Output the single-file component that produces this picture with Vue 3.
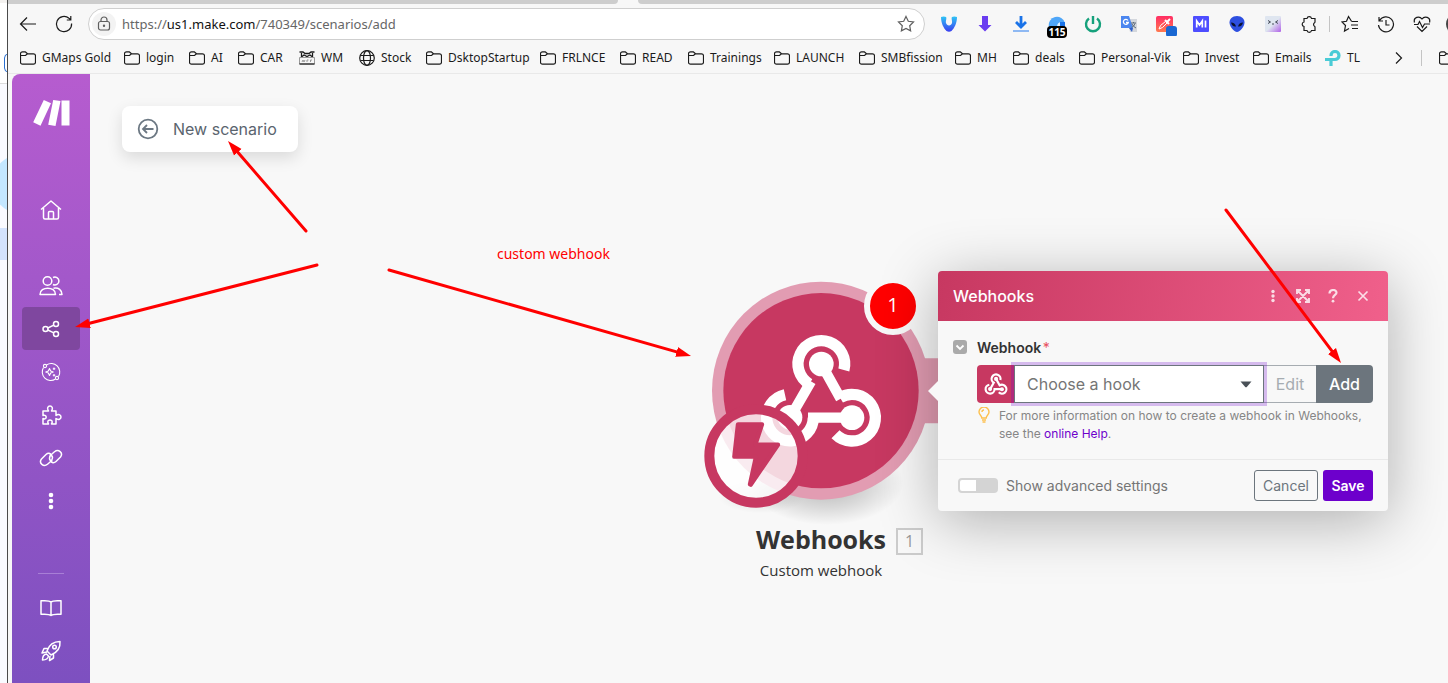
<script setup>
import { ref, computed } from 'vue'

const url = ref('https://us1.make.com/740349/scenarios/add')
const urlParts = computed(() => url.value.match(/^(\w+:\/\/)?([^/]*)(.*)$/).slice(1))

const bookmarks = [
  { label: 'GMaps Gold', icon: 'folder' },
  { label: 'login', icon: 'folder' },
  { label: 'AI', icon: 'folder' },
  { label: 'CAR', icon: 'folder' },
  { label: 'WM', icon: 'mail' },
  { label: 'Stock', icon: 'globe' },
  { label: 'DsktopStartup', icon: 'folder' },
  { label: 'FRLNCE', icon: 'folder' },
  { label: 'READ', icon: 'folder' },
  { label: 'Trainings', icon: 'folder' },
  { label: 'LAUNCH', icon: 'folder' },
  { label: 'SMBfission', icon: 'folder' },
  { label: 'MH', icon: 'folder' },
  { label: 'deals', icon: 'folder' },
  { label: 'Personal-Vik', icon: 'folder' },
  { label: 'Invest', icon: 'folder' },
  { label: 'Emails', icon: 'folder' },
  { label: 'TL', icon: 'tl' }
]

const hook = ref('')
const advanced = ref(false)

const HEAD = 14
const arrows = [
  [306, 231, 228, 141],
  [317, 265, 75, 327],
  [389, 270, 691, 356],
  [1226, 210, 1341, 363]
].map(([x1, y1, x2, y2]) => {
  const len = Math.hypot(x2 - x1, y2 - y1)
  const k = (len - HEAD) / len
  return { x1, y1, x2: x1 + (x2 - x1) * k, y2: y1 + (y2 - y1) * k }
})
</script>

<template>
  <div class="desktop">
    <svg class="behind" viewBox="0 0 7 683" preserveAspectRatio="xMinYMin slice" aria-hidden="true">
      <rect width="7" height="683" fill="#f9faff" />
      <rect width="7" height="83" fill="#fff" />
      <rect width="7" height="3" fill="#f3f1ef" />
      <rect y="83" width="7" height="1" fill="#dcdcdc" />
      <rect x="4.5" y="54" width="12" height="18" rx="4" fill="#fff" stroke="#2a6fd0" />
      <circle cx="22" cy="184" r="30" fill="#c3e7ff" />
      <rect y="228" width="7" height="32" fill="#d3e3fd" />
    </svg>

    <div class="browser">
      <div class="tabs"><i class="tab-left"></i><i class="tab-right"></i></div>

      <header class="toolbar">
        <button class="tool" aria-label="Back">
          <svg width="20" height="20" viewBox="0 0 20 20"><path d="M18 10H2.500M9 3.500 2.500 10 9 16.500" /></svg>
        </button>
        <button class="tool" aria-label="Refresh">
          <svg width="20" height="20" viewBox="0 0 20 20"><path d="M17.600 9.500A7.600 7.600 0 1 1 15 4.300l1.500 1.200M16.800 2v4h-4" /></svg>
        </button>
        <div class="address">
          <span class="lock">
            <svg width="14" height="16" viewBox="0 0 14 16"><rect x="1.500" y="5.500" width="11" height="8.500" rx="2" /><path d="M4 5.500V4a3 3 0 0 1 6 0v1.500" /><circle cx="7" cy="9.800" r=".6" /></svg>
          </span>
          <div class="url">
            <input v-model="url" aria-label="Address" spellcheck="false" />
            <span aria-hidden="true">{{ urlParts[0] }}<b>{{ urlParts[1] }}</b>{{ urlParts[2] }}</span>
          </div>
          <button class="star" aria-label="Add to favorites">
            <svg width="18" height="18" viewBox="0 0 18 18"><path d="m9 1.500 2.300 4.800 5.200.7-3.800 3.700.9 5.200L9 13.400l-4.600 2.500.9-5.200L1.500 7l5.200-.7z" /></svg>
          </button>
        </div>

        <div class="extensions">
          <button aria-label="Vidyo"><svg width="18" height="18" viewBox="0 0 18 18"><defs><linearGradient id="vg" x2="0" y2="1"><stop offset="0" stop-color="#2fc6f5" /><stop offset="1" stop-color="#3a3df0" /></linearGradient></defs><path d="M1 2c1.500-.8 4-.8 5 0 1 1-.5 4 0 6 .5 1.500 1.500 2.500 3 2.500s2.500-1 3-2.500c.5-2-1-5 0-6 1-.8 3.500-.8 5 0 0 6-2.500 11-5.500 14q-2.500 1.500-5 0C3.500 13 1 8 1 2z" fill="url(#vg)" /></svg></button>
          <button aria-label="Downloader"><svg width="18" height="18" viewBox="0 0 18 18"><path d="M6 1h6v9h3.500L9 16.500 2.500 10H6z" fill="#6a3df0" /></svg></button>
          <button aria-label="Downloads"><svg width="18" height="18" viewBox="0 0 18 18"><path d="M9 1v11M4 7l5 5 5-5" fill="none" stroke="#1a73e8" stroke-width="2.800" /><path d="M1 16h16" stroke="#4a90f0" stroke-width="1.200" /></svg></button>
          <button class="counted" aria-label="Blocker"><svg width="18" height="18" viewBox="0 0 18 18"><path d="M1 12a8 8 0 0 1 16-4v4z" fill="#4fa6f8" /><path d="M9 12q0-5 5-5h3v5z" fill="#dff0ff" /><rect x="12" y="7" width="5" height="5" fill="#1a73e8" /></svg><em>115</em></button>
          <button aria-label="Power"><svg width="18" height="18" viewBox="0 0 18 18"><path d="M5 3.500a7 7 0 1 0 8 0M9 1v8" fill="none" stroke="#16a17c" stroke-width="2.400" /></svg></button>
          <button aria-label="Translate"><svg width="18" height="18" viewBox="0 0 18 18"><path d="M7 4h10v13h-7z" fill="#d4d7dc" /><path d="M1 1h8l4 12H1z" fill="#4b86ef" /><path d="m9 13 3 4 1-4z" fill="#2f5fc8" /><path d="M8 5.500A2.500 2.500 0 1 0 8.300 7.500H6" fill="none" stroke="#fff" stroke-width="1.300" /><path d="M11 8h5M13.500 7v1M15 8.500q-1 3-3.500 4M12 9q1 2.500 4 4" fill="none" stroke="#5c6b7a" /></svg></button>
          <button aria-label="Colour picker"><svg width="24" height="24" viewBox="0 0 24 24"><defs><linearGradient id="pg" x2="0" y2="1"><stop offset="0" stop-color="#ff2d64" /><stop offset="1" stop-color="#ff7a50" /></linearGradient></defs><rect x="3" y="4" width="17" height="16" rx="2" fill="url(#pg)" /><path d="m6 17 1.500-3.500 5-4 1.500 1.500-4.500 4.500z" fill="none" stroke="#fff" stroke-width="1" /><path d="m12 8 4 4M14 10l3-3" fill="none" stroke="#fff" stroke-width="2" /><rect x="13" y="14" width="11" height="11" rx="3" fill="#1967d2" /></svg></button>
          <button aria-label="MI"><svg width="18" height="18" viewBox="0 0 18 18"><rect x="1" y="1" width="16" height="16" rx="1" fill="#4d4dff" /><path d="M4.700 12.500V6l2.800 4 2.800-4v6.500M13.500 5.500v7" fill="none" stroke="#fff" stroke-width="1.700" /></svg></button>
          <button aria-label="Alien"><svg width="18" height="18" viewBox="0 0 18 18"><path d="M9 1c5 0 7.500 3 7.500 6.500 0 4-4.500 9.500-7.500 9.500S1.500 11.500 1.500 7.500C1.500 4 4 1 9 1z" fill="#2d4fe0" /><path d="M3 7.500q4 0 5 4-4 .5-5-4zM15 7.500q-4 0-5 4 4 .5 5-4z" fill="#0a1230" /></svg></button>
          <button aria-label="Face"><svg width="18" height="18" viewBox="0 0 18 18"><defs><linearGradient id="fg" x2="1" y2="1"><stop offset=".5" stop-color="#dfe6f0" /><stop offset="1" stop-color="#b060e8" /></linearGradient></defs><rect x="1" y="1" width="16" height="16" rx="1" fill="url(#fg)" /><path d="m4 5.500 2.500 1.500L4 8.500M14 5.500 11.500 7 14 8.500M8 9h2" fill="none" stroke="#444a58" /></svg></button>
          <button aria-label="Extensions"><svg class="line" width="18" height="18" viewBox="0 0 18 18"><path d="M4 3.500h3a2.300 2.300 0 0 1 4.500 0h3.500V7a1 1 0 0 1-.5.800 2 2 0 0 0 0 3.400 1 1 0 0 1 .5.800v3.500h-3.500a2.300 2.300 0 0 1-4.500 0H4V11.500a2.300 2.300 0 0 1 0-4.500z" /></svg></button>
          <i class="rule"></i>
          <button aria-label="Favorites"><svg class="line" width="18" height="18" viewBox="0 0 18 18"><path d="M10.500 6.300 7.500 1.500 5.500 6.300l-4.500.7 3.500 3.500-1 5.500 4.500-2.500M10.500 6.500h6.500M10 10h7M11 13.500h6" /></svg></button>
          <button aria-label="History"><svg class="line" width="18" height="18" viewBox="0 0 18 18"><path d="M2 2v4h4M2.500 5.500A7.500 7.500 0 1 1 1.500 10M9 5v5h3.500" /></svg></button>
          <button aria-label="Browser essentials"><svg class="line" width="18" height="18" viewBox="0 0 18 18"><path d="M1.500 7.500C0 2 6.500.5 9 4c2.500-3.500 9-2 7.500 3.500M4 11.500l5 5 5-5M1 9.500h4l1.500-3 3 6 2-3.500h5.500" /></svg></button>
          <button class="avatar" aria-label="Profile"><svg width="24" height="24" viewBox="0 0 24 24"><circle cx="17" cy="12" r="11" fill="#444" /></svg></button>
        </div>
      </header>

      <nav class="bookmarks" aria-label="Bookmarks">
        <a v-for="b in bookmarks" :key="b.label" href="#">
          <svg v-if="b.icon === 'folder'" width="16" height="16" viewBox="0 0 16 16"><path d="M.500 4.500V3.800A2 2 0 0 1 2.500 1.800h2.800l2.200 2H13.500a2 2 0 0 1 2 2v6.400a2 2 0 0 1-2 2h-11a2 2 0 0 1-2-2V4.500zM.500 5.500h5l2-1.700" /></svg>
          <svg v-else-if="b.icon === 'mail'" width="16" height="16" viewBox="0 0 16 16"><path d="M.500 2h3.500l2 1.500h4L12 2h3.500M2.500 3v4l2.500-2 3 1.500L11 5l2.500 2V3" stroke-width="1.300" /><path d="M.500 7.500h15v6.500H.500zM3 12l1-2 1 2 1-2M8 12v-2h1.500M11.500 12v-2h1.500" stroke="#999" stroke-width="1" /><path d="M.500 14h15" /></svg>
          <svg v-else-if="b.icon === 'globe'" width="16" height="16" viewBox="0 0 16 16"><circle cx="8" cy="8" r="7.300" /><ellipse cx="8" cy="8" rx="3.500" ry="7.300" /><path d="M1.500 5.500h13M1.500 10.500h13" /></svg>
          <svg v-else width="16" height="16" viewBox="0 0 16 16"><path class="tl" d="M6 6V5.500a4 4 0 1 1 4 4H0M6 9.500V16" /></svg>
          <span>{{ b.label }}</span>
        </a>
        <button class="more" aria-label="More bookmarks"><svg width="10" height="14" viewBox="0 0 10 14"><path d="m2 1.500 5.500 5.500L2 12.500" /></svg></button>
        <i class="rule"></i>
        <a href="#" aria-label="Other bookmarks"><svg width="16" height="16" viewBox="0 0 16 16"><path d="M.500 4.500V3.800A2 2 0 0 1 2.500 1.800h2.800l2.200 2H13.500a2 2 0 0 1 2 2v6.400a2 2 0 0 1-2 2h-11a2 2 0 0 1-2-2V4.500zM.500 5.500h5l2-1.700" /></svg></a>
      </nav>

      <main class="page">
        <nav class="sidebar" aria-label="Main">
          <a class="logo" href="#" aria-label="Make">
            <svg width="38" height="28" viewBox="0 0 38 28"><path d="M11.800 1 19 4.300 8.500 26.700 1.200 23.300zM21.200 1l7.300 1-5 25-7.300-1.300zM29.500 1.500h8v25h-8z" fill="#fff" /></svg>
          </a>
          <a class="home" href="#" aria-label="Home"><svg width="22" height="22" viewBox="0 0 22 22"><path d="M1 10.500 11 2l10 8.500M3.500 9v9.500a1.500 1.500 0 0 0 1.500 1.500h12a1.500 1.500 0 0 0 1.500-1.500V9M8.500 20v-6.500a1 1 0 0 1 1-1h3a1 1 0 0 1 1 1V20" /></svg></a>
          <a href="#" aria-label="Team"><svg width="24" height="22" viewBox="0 0 24 22"><circle cx="8.500" cy="6" r="4.300" /><path d="M14 2.500a4 4 0 1 1 0 7M1 19.500c0-8.500 15.500-8.500 15.500 0zM14.500 13.200c5-1 8.500 1.800 8.500 6.300h-3" /></svg></a>
          <a class="active" href="#" aria-label="Scenarios"><svg width="18" height="18" viewBox="0 0 18 18"><circle cx="3.500" cy="9" r="2.500" /><circle cx="14" cy="4" r="2.500" /><circle cx="14" cy="14" r="2.500" /><path d="m5.800 8 6-2.900M5.800 10l6 2.900" /></svg></a>
          <a href="#" aria-label="AI agents"><svg width="20" height="20" viewBox="0 0 20 20"><g class="thin"><path d="M5.500 3a8.500 8.500 0 0 1 12 11.500M14.500 17A8.500 8.500 0 0 1 2.500 5.500" /><circle cx="4" cy="4" r="1.600" /><circle cx="16" cy="16" r="1.600" /><path d="m8.500 6.500 1.200 2.500 2.500 1-2.500 1-1.200 2.500L7.300 11l-2.500-1 2.500-1zM13 5.500v2.500M11.800 6.700h2.500M13 12v2.500M11.800 13.200h2.500" /></g></svg></a>
          <a href="#" aria-label="Apps"><svg width="22" height="22" viewBox="0 0 22 22"><path d="M3 7h5.500C6.500 4.500 8 2 10 2s3.500 2.500 1.500 5H16v4.500c2.500-2 5-.500 5 1.500s-2.500 3.500-5 1.500V20h-4.500c1.500-2.500.5-4-1.500-4s-3 1.500-1.500 4H3v-5.500c4 2 4.500-4.500 0-3z" /></svg></a>
          <a href="#" aria-label="Connections"><svg width="24" height="20" viewBox="0 0 24 20"><path d="M13.500 13.500c-4-1-4-5 0-8l2-1.700c4-3.300 9 1.200 6 5.200l-4.500 4.500c-2 2-4.500 1.500-5.500-.500M10.500 6.500c4 1 4 5 0 8l-2 1.700c-4 3.300-9-1.200-6-5.200L7 6.500c2-2 4.500-1.500 5.500.5" /></svg></a>
          <a href="#" aria-label="More"><svg width="6" height="18" viewBox="0 0 6 18"><g fill="#fff" stroke="none"><circle cx="3" cy="3" r="2.300" /><circle cx="3" cy="9" r="2.300" /><circle cx="3" cy="15" r="2.300" /></g></svg></a>
          <div class="bottom">
            <hr />
            <a href="#" aria-label="Docs"><svg width="22" height="18" viewBox="0 0 22 18"><path d="M11 3C9.500 1.500 5 1.500 1 1.800v13.500c4-.3 8.500 0 10 1.200 1.500-1.200 6-1.500 10-1.200V1.800c-4-.3-8.500-.3-10 1.200zv13" /></svg></a>
            <a href="#" aria-label="What's new"><svg width="22" height="22" viewBox="0 0 22 22"><path d="M7 11C9 5 13 1.500 20 1.500c.5 6-3 11-9 13.500zM8 8.500H4L2 13l5-1M13.500 14v4L9.500 20.500l.5-4.500M6.500 14c-3 .5-4 3-4 6 3 0 5.500-1 6-4z" /><circle cx="14.500" cy="7" r="1.800" /></svg></a>
          </div>
        </nav>

        <section class="canvas">
          <button class="scenario">
            <svg width="22" height="22" viewBox="0 0 22 22"><circle cx="11" cy="11" r="9.300" /><path d="M16.500 11h-10M10 7l-4 4 4 4" /></svg>
            <span>New scenario</span>
          </button>

          <p class="note">custom webhook</p>

          <div class="module">
            <svg class="bubble" width="260" height="260" viewBox="0 0 780 780" aria-hidden="true">
              <defs><radialGradient id="sh"><stop offset="0" stop-color="#000" stop-opacity=".28" /><stop offset=".6" stop-color="#000" stop-opacity=".12" /><stop offset="1" stop-color="#000" stop-opacity="0" /></radialGradient></defs>
              <ellipse cx="410" cy="640" rx="230" ry="125" fill="url(#sh)" />
              <ellipse cx="215" cy="680" rx="130" ry="50" fill="url(#sh)" opacity=".4" />
              <path d="M700 265h80v195h-80z" fill="#e29cb2" />
              <circle cx="393" cy="362" r="327" fill="#e29cb2" />
              <circle cx="393" cy="362" r="293" fill="#c73861" />
              <g fill="none" stroke="#fff">
                <path d="M461.600 300A70 70 0 1 0 358 342" stroke-width="34" />
                <path d="M285 374A70 70 0 1 0 370 443" stroke-width="34" />
                <path d="M436.500 492.500A70 70 0 1 0 450 383" stroke-width="34" />
                <path d="M363 334 303 438M354 443H486M452 386 396 286" stroke-width="31" />
              </g>
              <g fill="#fff"><circle cx="394" cy="282" r="37" /><circle cx="300" cy="442" r="37" /><circle cx="486" cy="443" r="37" /></g>
              <circle cx="198" cy="558" r="140" fill="#fff" fill-opacity=".8" />
              <circle cx="198" cy="558" r="140" fill="none" stroke="#c73861" stroke-width="30" />
              <path d="M144 463h72l-20 61h68l-82 120-2-1 18-83h-65z" fill="#c73861" stroke="#c73861" stroke-width="13" stroke-linejoin="round" />
            </svg>
            <span class="badge">1</span>
            <h2>Webhooks<span class="order">1</span></h2>
            <p>Custom webhook</p>
          </div>

          <form class="panel" @submit.prevent>
            <header>
              <h3>Webhooks</h3>
              <button type="button" aria-label="Menu"><svg width="6" height="14" viewBox="0 0 6 14"><g fill="#fff"><circle cx="3" cy="2.500" r="1.700" /><circle cx="3" cy="7" r="1.700" /><circle cx="3" cy="11.500" r="1.700" /></g></svg></button>
              <button type="button" aria-label="Expand"><svg width="14" height="14" viewBox="0 0 14 14"><path d="M1 5V1h4M9 1h4v4M13 9v4H9M5 13H1V9M1.500 1.500l11 11M12.500 1.500l-11 11" fill="none" stroke="#fff" stroke-width="1.900" /></svg></button>
              <button type="button" aria-label="Help"><svg width="10" height="14" viewBox="0 0 10 14"><path d="M1.500 4.500c0-4.500 7-4.500 7-.8C8.500 6 5 6 5 9.200" fill="none" stroke="#fff" stroke-width="2.200" /><circle cx="5" cy="12.200" r="1.400" fill="#fff" /></svg></button>
              <button type="button" aria-label="Close"><svg width="12" height="12" viewBox="0 0 12 12"><path d="m1.500 1.500 9 9M10.500 1.500l-9 9" stroke="#fff" stroke-width="1.700" /></svg></button>
            </header>

            <div class="fields">
              <div class="caption">
                <button type="button" class="fold" aria-label="Collapse"><svg width="14" height="14" viewBox="0 0 14 14"><path d="m3.500 5.500 3.500 3.500 3.500-3.500" fill="none" stroke="#fff" stroke-width="1.800" /></svg></button>
                <label for="hook">Webhook <i>*</i></label>
              </div>
              <div class="picker">
                <span class="app">
                  <svg width="24" height="24" viewBox="205 180 376 364"><g fill="none" stroke="#fff" stroke-width="34"><path d="M461.600 300A70 70 0 1 0 358 342L303 438M288 373A70 70 0 1 0 370 443H480M436.500 492.500A70 70 0 1 0 450 383L398 290" /></g><g fill="#fff"><circle cx="394" cy="282" r="32" /><circle cx="300" cy="442" r="32" /><circle cx="486" cy="443" r="32" /></g></svg>
                </span>
                <div class="select">
                  <select id="hook" v-model="hook"><option value="">Choose a hook</option></select>
                  <svg width="12" height="7" viewBox="0 0 12 7"><path d="M.500.500h11L7 5.800q-1 1-2 0z" fill="#495057" /></svg>
                </div>
                <button type="button" class="edit" disabled>Edit</button>
                <button type="button" class="add">Add</button>
              </div>
              <div class="help">
                <svg width="12" height="16" viewBox="0 0 12 16"><path d="M3.800 11C3.800 8.500 1 8 1 5a5 5 0 0 1 10 0c0 3-2.800 3.500-2.800 6zM4 13h4M4.500 15h3M6 3Q4 3 4 5" fill="none" stroke="#fdc04f" stroke-width="1.400" /></svg>
                <p>For more information on how to create a webhook in Webhooks, see the <a href="#">online Help</a>.</p>
              </div>
            </div>

            <footer>
              <label class="advanced"><input v-model="advanced" type="checkbox" />Show advanced settings</label>
              <button type="button" class="cancel">Cancel</button>
              <button type="submit" class="save">Save</button>
            </footer>
          </form>
        </section>
      </main>
    </div>

    <svg class="arrows" aria-hidden="true">
      <defs>
        <marker id="head" markerUnits="userSpaceOnUse" markerWidth="16" markerHeight="12" refX="1" refY="6" orient="auto">
          <path d="M0 1 15 6 0 11z" fill="#f00" />
        </marker>
      </defs>
      <line v-for="(a, i) in arrows" :key="i" v-bind="a" marker-end="url(#head)" />
    </svg>
  </div>
</template>

<style>
body {
  margin: 0;
}
</style>

<style scoped>
* {
  box-sizing: border-box;
}
button {
  border: 0;
  padding: 0;
  background: none;
  font: inherit;
  color: inherit;
  display: flex;
  align-items: center;
  justify-content: center;
}
a {
  color: inherit;
  text-decoration: none;
}
svg {
  flex: none;
}
.desktop {
  position: relative;
  display: flex;
  height: 100vh;
  overflow: hidden;
  background: #f7f7f7;
  font-family: "Noto Sans", "Open Sans", sans-serif;
}
.behind {
  width: 7px;
  height: 100%;
}
.browser {
  flex: 1;
  min-width: 0;
  display: flex;
  flex-direction: column;
  border-left: 1px solid #4a4a4a;
}
.tabs {
  display: flex;
  gap: 20px;
  height: 4px;
}
.tabs i {
  background: #cdcdcd;
}
.tab-left {
  flex: 610;
  border-bottom-right-radius: 4px;
}
.tab-right {
  flex: 810;
  border-bottom-left-radius: 4px;
}
.toolbar {
  display: flex;
  align-items: center;
  height: 40px;
  padding-left: 2px;
}
.tool {
  width: 36px;
  height: 32px;
}
.tool svg,
.address svg,
.bookmarks svg,
.line {
  fill: none;
  stroke: #1b1b1b;
  stroke-width: 1.2;
}
.bookmarks .tl {
  stroke: #4acbd6;
  stroke-width: 3.2;
}
.address {
  flex: 1;
  min-width: 0;
  display: flex;
  align-items: center;
  height: 32px;
  margin-left: 6px;
  padding: 0 9px 0 3px;
  border: 1px solid #cfcfcf;
  border-radius: 16px;
  background: #fff;
}
.address svg {
  stroke: #5f5f5f;
}
.lock {
  display: flex;
  align-items: center;
  justify-content: center;
  width: 24px;
  height: 24px;
  border-radius: 12px;
  background: #f3f3f3;
}
.url {
  position: relative;
  flex: 1;
  margin-left: 6px;
  font-size: 13px;
  line-height: 20px;
  color: #666;
}
.url input {
  display: block;
  width: 100%;
  padding: 0;
  border: 0;
  outline: 0;
  background: none;
  font: inherit;
  color: transparent;
  caret-color: #111;
}
.url span {
  position: absolute;
  inset: 0;
  pointer-events: none;
}
.url b {
  font-weight: 400;
  color: #111;
}
.extensions {
  display: flex;
  align-items: center;
  margin-left: 6px;
}
.extensions button {
  position: relative;
  width: 36px;
  height: 32px;
}
.extensions .avatar {
  width: 8px;
  overflow: hidden;
  justify-content: flex-start;
}
.counted em {
  position: absolute;
  top: 18px;
  left: 8px;
  width: 20px;
  border-radius: 4px;
  background: #000;
  color: #fff;
  font: 700 10px/12px "Open Sans", sans-serif;
  text-align: center;
}
.rule {
  width: 5px;
  height: 16px;
  background: linear-gradient(90deg, transparent 2px, #c4c4c4 2px, #c4c4c4 3px, transparent 3px);
}
.bookmarks {
  display: grid;
  grid-template-columns: 104px 65px 49px 61px 60px 67px 114px 80px 68px 86px 85px 96px 58px 66px 104px 70px 72px 1fr 10px 35px 9px;
  align-items: center;
  height: 30px;
  padding: 0 0 2px 12px;
  border-bottom: 1px solid #e9e9e9;
  font-size: 12px;
  line-height: 16px;
  color: #1b1b1b;
  overflow: hidden;
}
.bookmarks a {
  display: flex;
  align-items: center;
  gap: 6px;
  white-space: nowrap;
}
.bookmarks .rule {
  justify-self: center;
}
.page {
  flex: 1;
  min-height: 0;
  display: flex;
  padding-left: 4px;
}
.sidebar {
  width: 78px;
  display: flex;
  flex-direction: column;
  align-items: center;
  padding: 24px 10px 11px;
  border-top-left-radius: 8px;
  background: linear-gradient(#b65ccf, #7d50c0);
}
.sidebar a {
  display: flex;
  align-items: center;
  justify-content: center;
  width: 58px;
  height: 43px;
  flex: none;
  border-radius: 4px;
}
.sidebar a svg {
  fill: none;
  stroke: #fff;
  stroke-width: 1.5;
  stroke-linejoin: round;
}
.sidebar .thin {
  stroke-width: 1.1;
}
.sidebar .logo {
  height: 30px;
}
.sidebar .logo svg {
  stroke: none;
}
.sidebar .home {
  margin: 60px 0 33px;
}
.sidebar .active {
  background: #7f479f;
}
.bottom {
  display: flex;
  flex-direction: column;
  align-items: center;
  margin-top: auto;
}
.bottom hr {
  width: 26px;
  margin: 0 0 12px;
  border: 0;
  border-top: 1px solid #a87fd6;
}
.canvas {
  position: relative;
  flex: 1;
  min-width: 0;
  padding: 32px;
  background: #f8f8f8;
  overflow: hidden;
  font-family: Inter, sans-serif;
}
.scenario {
  gap: 14px;
  height: 46px;
  padding: 0 21px 0 15px;
  border-radius: 8px;
  background: #fff;
  box-shadow: 0 6px 16px rgba(0, 0, 0, 0.12);
  font-size: 16px;
  color: #5a646e;
}
.scenario svg {
  fill: none;
  stroke: #6c7883;
  stroke-width: 1.8;
}
.note {
  position: absolute;
  left: 407px;
  top: 170px;
  margin: 0;
  color: #f00;
  font: 14px/20px "Noto Sans", sans-serif;
}
.module {
  position: absolute;
  left: 600px;
  top: 196px;
  width: 262px;
  text-align: center;
  font-family: "Open Sans", sans-serif;
  color: #333;
}
.bubble {
  display: block;
  margin-bottom: -8px;
}
.badge {
  position: absolute;
  left: 174px;
  top: 7px;
  width: 58px;
  height: 58px;
  border: 6px solid #f8f8f8;
  border-radius: 50%;
  background: #f00;
  color: #fff;
  font-size: 20px;
  line-height: 44px;
}
.module h2 {
  position: relative;
  margin: 0;
  font-size: 25px;
  line-height: 34px;
}
.order {
  position: absolute;
  right: 29px;
  top: 6px;
  width: 27px;
  height: 27px;
  border: 2px solid #ccc;
  font-size: 16px;
  font-weight: 400;
  line-height: 23px;
  color: #999;
}
.module p {
  margin: 4px 0 0;
  font-size: 15px;
  line-height: 20px;
}
.panel {
  position: absolute;
  left: 848px;
  top: 197px;
  width: 450px;
  border-radius: 4px;
  background: #f8f8f8;
  box-shadow: 0 10px 60px rgba(0, 0, 0, 0.3);
}
.panel::before {
  content: "";
  position: absolute;
  left: -10px;
  top: 110px;
  border: solid transparent;
  border-width: 10px 10px 10px 0;
  border-right-color: #f8f8f8;
}
.panel header {
  display: flex;
  align-items: center;
  height: 50px;
  padding: 0 10px 0 15px;
  border-radius: 4px 4px 0 0;
  background: linear-gradient(100deg, #c73861, #f0608b);
}
.panel h3 {
  margin: 0 auto 0 0;
  color: #fff;
  font-size: 16px;
  font-weight: 500;
}
.panel header button {
  width: 30px;
  height: 30px;
  opacity: 0.8;
}
.fields {
  padding: 16px 15px 16px;
}
.caption {
  display: flex;
  align-items: center;
  gap: 10px;
  height: 20px;
  font-size: 14px;
  font-weight: 600;
  color: #333;
}
.caption i {
  margin-left: -2px;
  font-style: normal;
  font-weight: 400;
  color: #e8505f;
}
.fold {
  border-radius: 3px;
  background: #aaa;
}
.picker {
  display: flex;
  height: 38px;
  margin: 8px 0 4px 24px;
  font-size: 16px;
}
.app {
  display: flex;
  align-items: center;
  justify-content: center;
  width: 37px;
  border-radius: 4px 0 0 4px;
  background: #c73861;
}
.select {
  position: relative;
  flex: 1;
  box-shadow: 0 0 0 3px rgba(109, 0, 204, 0.25);
}
.select select {
  width: 100%;
  height: 100%;
  padding: 0 12px;
  appearance: none;
  border: 1px solid #6c757d;
  border-radius: 0;
  outline: 0;
  background: #fff;
  font: inherit;
  color: #757575;
}
.select svg {
  position: absolute;
  right: 12px;
  top: 16px;
  pointer-events: none;
}
.edit {
  width: 52px;
  border: 1px solid #a6acb1;
  border-width: 1px 0;
  color: #a6acb1;
}
.add {
  width: 57px;
  border-radius: 0 4px 4px 0;
  background: #6c757d;
  color: #fff;
  font-weight: 500;
}
.help {
  display: flex;
  gap: 9px;
  margin-left: 25px;
  font-size: 12px;
  line-height: 18px;
  color: #868686;
}
.help p {
  margin: 0;
}
.help a {
  color: #6d00cc;
}
.panel footer {
  display: flex;
  align-items: center;
  height: 52px;
  padding: 0 15px 0 20px;
  border-top: 1px solid #e9e9e9;
  font-size: 14px;
}
.advanced {
  display: flex;
  align-items: center;
  gap: 8px;
  margin-right: auto;
  color: #757575;
}
.advanced input {
  appearance: none;
  width: 40px;
  height: 15px;
  margin: 0;
  border: 2px solid #d4d4d4;
  border-radius: 4px;
  background: linear-gradient(90deg, #fff 16px, #d4d4d4 16px);
}
.advanced input:checked {
  background: linear-gradient(90deg, #6d00cc 20px, #fff 20px);
}
.cancel,
.save {
  height: 31px;
  border-radius: 3px;
}
.cancel {
  width: 64px;
  margin-right: 5px;
  border: 1px solid #6c757d;
  color: #6c757d;
}
.save {
  width: 50px;
  background: #6d00cc;
  color: #fff;
  font-weight: 600;
}
.arrows {
  position: absolute;
  inset: 0;
  width: 100%;
  height: 100%;
  pointer-events: none;
  stroke: #f00;
  stroke-width: 3;
  stroke-linecap: round;
}
.arrows marker path {
  stroke: none;
}
</style>
